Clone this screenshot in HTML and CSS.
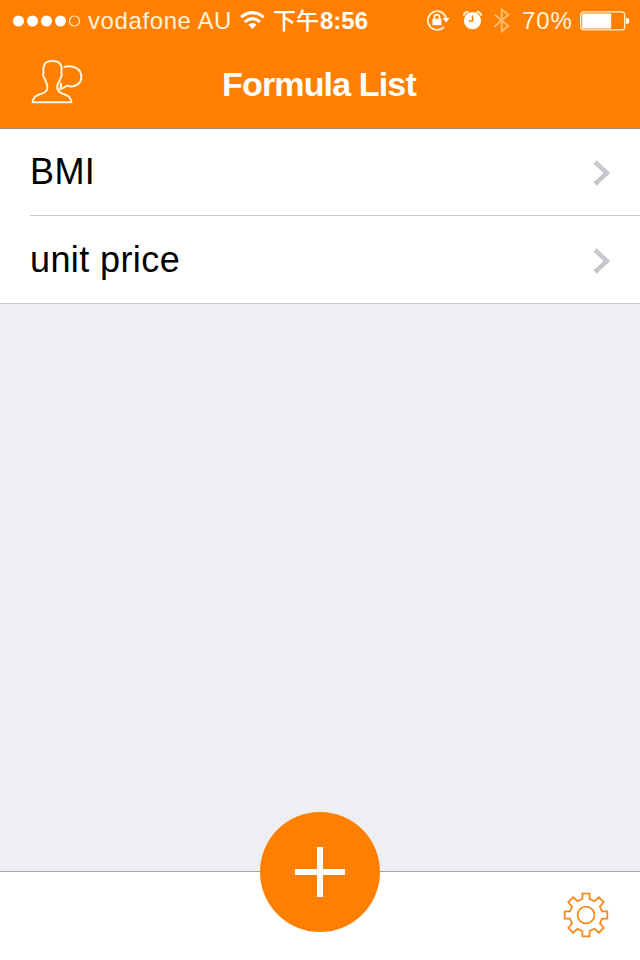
FILE: index.html
```html
<!DOCTYPE html>
<html lang="en">
<head>
<meta charset="utf-8">
<meta name="viewport" content="width=640">
<title>Formula List</title>
<link rel="stylesheet" href="styles.css">
</head>
<body>

<header class="header">
  <div class="status">
    <svg class="signal" width="68" height="12" viewBox="0 0 68 12">
      <circle cx="5.5" cy="6" r="5.5"/>
      <circle cx="19.5" cy="6" r="5.5"/>
      <circle cx="33.5" cy="6" r="5.5"/>
      <circle cx="47.5" cy="6" r="5.5"/>
      <circle class="signal-empty" cx="61.5" cy="6" r="5"/>
    </svg>
    <span class="carrier">vodafone AU</span>
    <svg class="wifi" width="26" height="20" viewBox="0 0 26 20">
      <path class="wifi-arc" d="M1 6.2Q12.4 -3 23.8 6.2M4.8 10.8Q12.4 4.4 20 10.8"/>
      <path class="wifi-dot" d="M8.2 13.6Q12.4 10.2 16.6 13.6L12.4 18Z"/>
    </svg>
    <span class="time"><span class="ampm">下午</span>8:56</span>

    <svg class="lock" width="24" height="22" viewBox="0 0 24 22">
      <path class="lock-ring" d="M19.2 8.4A9.3 9.3 0 1 0 17 16.8"/>
      <path class="lock-arrow" d="M15.6 8H22.6L19.1 12.4Z"/>
      <rect class="lock-body" x="5.4" y="8.8" width="9" height="6.4"/>
      <path class="lock-bar" d="M7.3 9.4V7.2a2.6 2.6 0 0 1 5.2 0V9.4"/>
    </svg>
    <svg class="alarm" width="20" height="20" viewBox="0 0 20 20">
      <path class="alarm-bell" d="M0.8 4.8A4 4 0 0 1 5.6 1M18.2 4.8A4 4 0 0 0 13.4 1"/>
      <circle class="alarm-face" cx="9.5" cy="9.6" r="8.6"/>
      <path class="alarm-hand" d="M9.5 4.4V10H5.7"/>
    </svg>
    <svg class="bluetooth" width="18" height="26" viewBox="0 0 18 26">
      <path d="M1.6 6.4L15.2 18L8.8 23.4V1.6L15.2 6.8L1.6 18.4"/>
    </svg>
    <span class="percent">70%</span>
    <svg class="battery" width="50" height="20" viewBox="0 0 50 20">
      <rect class="battery-case" x="0.7" y="0.9" width="44" height="18" rx="3"/>
      <rect class="battery-level" x="2.2" y="2.4" width="29" height="15" rx="1"/>
      <path class="battery-tip" d="M46 6.8Q49.4 7.2 49.4 10Q49.4 12.8 46 13.2Z"/>
    </svg>
  </div>

  <nav class="navbar">
    <svg class="contact" width="75" height="60" viewBox="0 0 225 180">
      <path d="M38 157Q38 141 56 134Q80 128 82 116Q83 104 77 94Q75 85 71 82Q67 73 71 67Q65 33 97 33Q130 33 124 67Q127 74 123 82Q120 92 116 97Q109 107 113 119Q117 129 136 134Q154 141 154 157Z"/>
      <path d="M131 51C162 43 184 58 184 80C184 102 163 115 141 107Q132 114 121 116Q124 110 123 99"/>
    </svg>
    <h1 class="title">Formula List</h1>
  </nav>
</header>

<main class="content">
  <ul class="list">
    <li class="row">
      <span class="row-label">BMI</span>
      <svg class="chevron" width="18" height="28" viewBox="0 0 18 28"><path d="M2 4L14 15L2 26"/></svg>
    </li>
    <li class="row">
      <span class="row-label">unit price</span>
      <svg class="chevron" width="18" height="28" viewBox="0 0 18 28"><path d="M2 4L14 15L2 26"/></svg>
    </li>
  </ul>
</main>

<footer class="toolbar">
  <button class="add" aria-label="Add">
    <svg width="52" height="52" viewBox="0 0 52 52"><path d="M26 1V51M1 26H51"/></svg>
  </button>
  <svg class="gear" width="46" height="46" viewBox="-23 -23 46 46">
    <path d="M-3.6 -21.3H3.6V-16L8.4 -13.9L12.9 -17.7L17.7 -12.9L13.9 -8.4L16 -3.6H21.3V3.6H16L13.9 8.4L17.7 12.9L12.9 17.7L8.4 13.9L3.6 16V21.3H-3.6V16L-8.4 13.9L-12.9 17.7L-17.7 12.9L-13.9 8.4L-16 3.6H-21.3V-3.6H-16L-13.9 -8.4L-17.7 -12.9L-12.9 -17.7L-8.4 -13.9L-3.6 -16Z"/>
    <circle r="8.4"/>
  </svg>
</footer>

</body>
</html>
```
FILE: styles.css
```css
* {
  box-sizing: border-box;
}

body {
  display: flex;
  flex-direction: column;
  width: 640px;
  height: 960px;
  margin: 0;
  background: #eeeff3;
  color: #000;
  font-family: "Liberation Sans", "Noto Sans CJK SC", sans-serif;
  overflow: hidden;
}

svg {
  display: block;
  flex: none;
  fill: none;
}

/* header */
.header {
  height: 129px;
  background: #ff8000;
  border-bottom: 1px solid #a08c78;
  color: #fff;
}

.status {
  display: flex;
  align-items: center;
  height: 41px;
  padding: 0 10px 0 13px;
  font-size: 24px;
  line-height: 42px;
  white-space: nowrap;
}

.signal {
  fill: #fff;
}

.signal-empty {
  fill: none;
  stroke: #ffe9c4;
  stroke-width: 1.2;
}

.carrier {
  width: 159px;
  padding-left: 7px;
  color: #fff3da;
  letter-spacing: 0.6px;
}

.wifi-arc {
  stroke: #fff;
  stroke-width: 3;
}

.wifi-dot {
  fill: #fff;
}

.time {
  width: 161px;
  padding-left: 7px;
  font-size: 24px;
  font-weight: bold;
}

.ampm {
  margin-right: 1px;
  font-size: 23px;
  font-weight: 500;
}

.lock-ring {
  stroke: #fff0d0;
  stroke-width: 1.8;
}

.lock-arrow,
.lock-body {
  fill: #fff;
}

.lock-bar {
  stroke: #fff;
  stroke-width: 1.8;
}

.alarm {
  margin-left: 12px;
}

.alarm-bell {
  stroke: #fff0d0;
  stroke-width: 2;
}

.alarm-face {
  fill: #fff;
}

.alarm-hand {
  stroke: #ff8000;
  stroke-width: 1.6;
}

.bluetooth {
  margin-left: 10px;
  stroke: #ffb868;
  stroke-width: 2;
}

.percent {
  width: 58px;
  margin-left: 11px;
  color: #fff3da;
  letter-spacing: 0.9px;
}

.battery-case {
  stroke: #fff0d0;
  stroke-width: 1.3;
}

.battery-level,
.battery-tip {
  fill: #fff;
}

.navbar {
  display: grid;
  grid-template-columns: 95px 1fr 95px;
  align-items: center;
  height: 85px;
}

.contact {
  align-self: start;
  justify-self: end;
  margin-top: 9px;
  stroke: #fff5dc;
  stroke-width: 6;
}

.title {
  margin: 0 2px 0 0;
  font-size: 34px;
  font-weight: bold;
  line-height: 40px;
  letter-spacing: -0.85px;
  text-align: center;
}

/* list */
.content {
  flex: 1;
}

.list {
  margin: 0;
  padding: 0 0 0 30px;
  background: #fff;
  border-bottom: 1px solid #c8c7cc;
  list-style: none;
}

.row {
  display: flex;
  align-items: center;
  justify-content: space-between;
  height: 86px;
  padding-right: 29px;
  font-size: 36px;
  letter-spacing: 0.4px;
}

.row + .row {
  height: 88px;
  border-top: 1px solid #c8c7cc;
}

.chevron {
  stroke: #c7c7cc;
  stroke-width: 4.5;
}

/* toolbar */
.toolbar {
  position: relative;
  display: flex;
  align-items: center;
  justify-content: flex-end;
  height: 89px;
  padding: 0 31px 2px 0;
  background: #fff;
  border-top: 1px solid #a8a8aa;
}

.add {
  position: absolute;
  top: -60px;
  left: 260px;
  display: flex;
  align-items: center;
  justify-content: center;
  width: 120px;
  height: 120px;
  padding: 0;
  border: 0;
  border-radius: 50%;
  background: #ff8000;
}

.add svg {
  stroke: #fff;
  stroke-width: 6;
}

.gear {
  stroke: #f58a1f;
  stroke-width: 1.8;
}
```
